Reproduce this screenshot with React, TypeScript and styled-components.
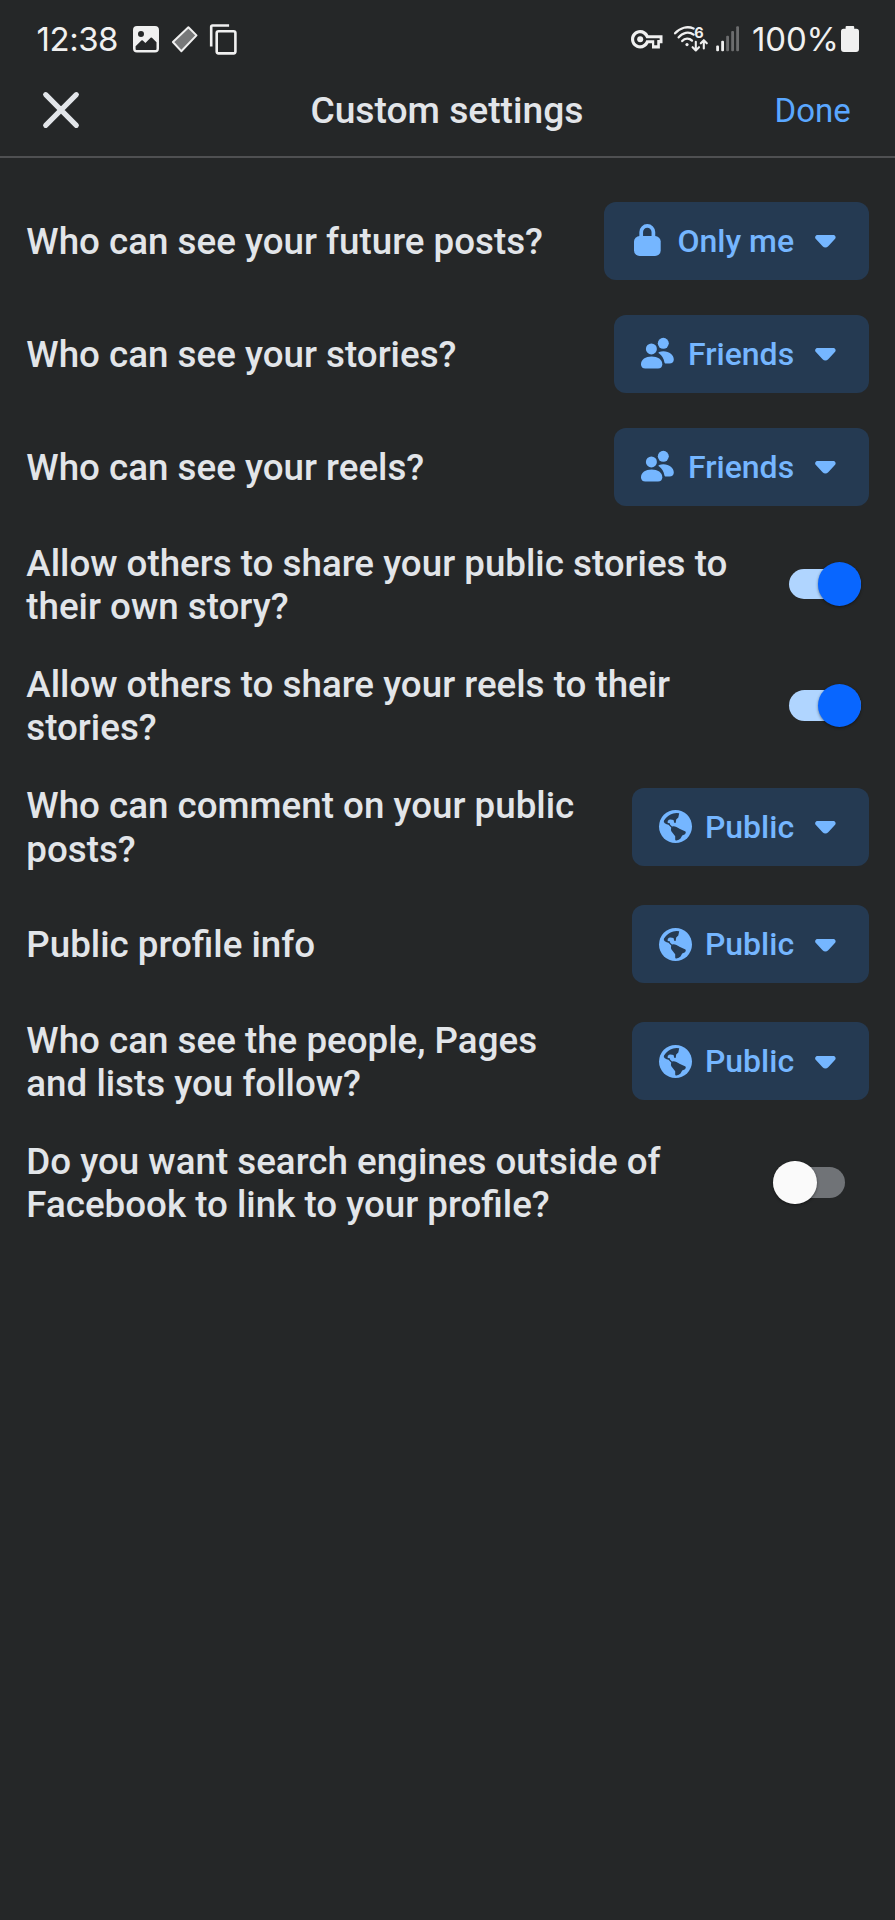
import React from 'react';
import styled, { createGlobalStyle } from 'styled-components';

const colors = {
  page: '#252728',
  text: '#e2e5e9',
  status: '#f0f0f0',
  statusDim: '#6c6d6e',
  link: '#5aa7ff',
  divider: '#4f5052',
  button: '#253a52',
  accent: '#75b6ff',
};

const GlobalStyle = createGlobalStyle`
  * { box-sizing: border-box; }
  body {
    margin: 0;
    background: ${colors.page};
    color: ${colors.text};
    font-family: Roboto, sans-serif;
  }
  svg { display: block; flex: none; overflow: visible; }
  button { font: inherit; color: inherit; border: 0; padding: 0; background: none; }
`;

const Screen = styled.div`
  display: flex;
  flex-direction: column;
  min-height: 1920px;
  background: ${colors.page};
`;

const StatusBar = styled.div`
  display: flex;
  align-items: center;
  justify-content: space-between;
  height: 64px;
  padding: 14px 35.7px 0 36.6px;
  color: ${colors.status};
  font: 400 33px/50px Inter, sans-serif;
`;

const StatusGroup = styled.div<{ $gap: number }>`
  display: flex;
  align-items: center;
  gap: ${(p) => p.$gap}px;
`;

const Clock = styled.span`
  margin-right: 2.3px;
  letter-spacing: -0.5px;
`;

const Battery = styled.span`
  display: flex;
  align-items: center;
  gap: 2.6px;
  margin-left: 5.2px;
`;

const Percent = styled.span`
  letter-spacing: -0.2px;
`;

const Header = styled.header`
  display: grid;
  grid-template-columns: 1fr auto 1fr;
  align-items: center;
  height: 94px;
  padding: 0 44.2px 0 43px;
  border-bottom: 2px solid ${colors.divider};
`;

const Title = styled.h1`
  margin: 0;
  padding-top: 1px;
  font-size: 37.2px;
  line-height: 43px;
  font-weight: 500;
`;

const DoneButton = styled.button`
  justify-self: end;
  padding-top: 1px;
  color: ${colors.link};
  font-size: 33px;
  line-height: 40px;
`;

const CloseButton = styled.button`
  justify-self: start;
`;

const List = styled.main`
  display: flex;
  flex-direction: column;
  padding: 26.3px 26px 0 26.3px;
`;

const Row = styled.div`
  display: flex;
  align-items: center;
  justify-content: space-between;
  gap: 32px;
  padding: 17.5px 0;
`;

const Label = styled.span`
  padding-top: 0.8px;
  margin-bottom: -0.8px;
  font-size: 36.74px;
  line-height: 43.2px;
  font-weight: 500;
`;

const PrivacyButton = styled.button`
  display: flex;
  align-items: center;
  flex: none;
  height: 78px;
  padding: 0 33px 0 27px;
  border-radius: 12px;
  background: ${colors.button};
  color: ${colors.accent};
`;

const PrivacyText = styled.span`
  margin: 0 20.9px 0 13.2px;
  font-size: 32px;
  line-height: 40px;
  font-weight: 500;
`;

const Track = styled.button<{ $on: boolean }>`
  display: flex;
  align-items: center;
  justify-content: ${(p) => (p.$on ? 'flex-end' : 'flex-start')};
  flex: none;
  width: 72px;
  height: 30.6px;
  margin-right: ${(p) => (p.$on ? 7.9 : 23.8)}px;
  border-radius: 16px;
  background: ${(p) => (p.$on ? '#b0d5ff' : '#707377')};
`;

const Thumb = styled.span<{ $on: boolean }>`
  width: 43.6px;
  height: 43.6px;
  border-radius: 50%;
  background: ${(p) => (p.$on ? '#0866ff' : '#fafafa')};
  box-shadow: 0 1px 3px rgba(0, 0, 0, 0.45);
`;

const ImageIcon = () => (
  <svg width="26" height="26.4" viewBox="0 0 26 26.4" fill="currentColor">
    <path
      fillRule="evenodd"
      d="M4 0H22a4 4 0 0 1 4 4V22.4a4 4 0 0 1-4 4H4a4 4 0 0 1-4-4V4a4 4 0 0 1 4-4zM8 5.1a3 3 0 1 0 0 6a3 3 0 1 0 0-6zM2.6 20.2V23q0 .9.9.9H22.6q.9 0 .9-.9V16.2L19 11.8q-.7-.6-1.4 0L12.4 17L9.8 14.6q-.7-.6-1.4 0z"
    />
  </svg>
);

const EraserIcon = () => (
  <svg width="26" height="27" viewBox="0.5 0 26 27">
    <path d="M16.9 1.3L25 9.4L9.8 25.2L1.4 16z" fill="#777879" stroke="currentColor" strokeWidth="2" strokeLinejoin="round" />
  </svg>
);

const CopyIcon = () => (
  <svg width="27" height="31" viewBox="0.3 0 27 31" fill="none" stroke="currentColor" strokeWidth="2.6">
    <path d="M1.5 22.5V2.8Q1.5 1.5 2.8 1.5H19.4" />
    <rect x="7" y="7.2" width="18.7" height="22.2" rx="1.8" />
  </svg>
);

const KeyIcon = () => (
  <svg width="31.5" height="18.4" viewBox="0 5 24 14" fill="currentColor">
    <path
      fillRule="evenodd"
      d="M22 19h-6v-4h-2.68c-1.14 2.42-3.6 4-6.32 4-3.86 0-7-3.14-7-7s3.14-7 7-7c2.72 0 5.17 1.58 6.32 4H24v6h-2v4zm-4.3-2.3h2.3v-4h1.8v-1.4H11.6l-.4-.9C10.5 8.7 8.9 7.4 7 7.4c-2.5 0-4.6 2-4.6 4.6s2.1 4.6 4.6 4.6c1.9 0 3.6-1.2 4.3-3l.3-.8H17.7v3.9z"
    />
    <circle cx="7" cy="12" r="2.3" />
  </svg>
);

const WifiIcon = () => (
  <svg width="34" height="26" viewBox="0 0 34 26" fill="none" stroke="currentColor" strokeLinecap="round">
    <g strokeWidth="2.3">
      <path d="M1.1 7.3C6 1.6 13.5 -.2 19.6 2.5" />
      <path d="M4.6 11.4C8.4 6.4 15 5.2 19.6 8.6" />
      <path d="M8.2 15C10.8 11.9 15.2 11.7 18 14.6" />
    </g>
    <circle cx="13" cy="18.6" r="1.6" fill="currentColor" stroke="none" />
    <g strokeWidth="2.1" strokeLinejoin="round">
      <path d="M21.8 15.8V24.2M18.6 21.2L21.8 24.4L25 21.2" />
      <path d="M29.8 22.4V14.4M26.8 17.3L29.8 14.2L32.8 17.3" />
    </g>
    <text x="20.2" y="11.5" fontFamily="Inter, sans-serif" fontSize="14.5" fontWeight="700" fill="currentColor" stroke="none">6</text>
  </svg>
);

const SignalIcon = () => (
  <svg width="23" height="26" viewBox="0 0 23 26" fill="currentColor">
    {[19.4, 14.8, 9.8, 5, 0.2].map((top, i) => (
      <rect key={top} x={0.2 + i * 5} y={top} width="2.8" height={25.3 - top} rx="1" fill={i < 2 ? colors.status : colors.statusDim} />
    ))}
  </svg>
);

const BatteryIcon = () => (
  <svg width="18" height="26" viewBox="0 0 18 26" fill="currentColor">
    <path d="M5.6 0H12.2Q13.2 0 13.2 1V2.8H15.4Q18 2.8 18 5.4V23Q18 26 15 26H3Q0 26 0 23V5.4Q0 2.8 2.6 2.8H4.6V1Q4.6 0 5.6 0z" />
  </svg>
);

const CloseIcon = () => (
  <svg width="36" height="36" viewBox="0 0 36 36" stroke={colors.text} strokeWidth="5.2" strokeLinecap="round">
    <path d="M2.7 2.7L33.3 33.3M33.3 2.7L2.7 33.3" />
  </svg>
);

const LockIcon = () => (
  <svg width="33" height="33" viewBox="0 0 33 33" fill="currentColor">
    <path d="M10.2 14V8a6.1 6.1 0 0 1 12.2 0v6" fill="none" stroke="currentColor" strokeWidth="3.7" />
    <rect x="3" y="12" width="26.7" height="20" rx="5.6" />
  </svg>
);

const FriendsIcon = () => (
  <svg width="33.8" height="33" viewBox="0 0 33.8 33" fill="currentColor">
    <circle cx="10.4" cy="11.9" r="5.5" />
    <circle cx="22.3" cy="6.3" r="5.5" />
    <path d="M0 27.3C0 22.5 4.5 19.5 10.6 19.5S21.3 22.5 21.3 27.3C21.3 30 19.7 31.6 17 31.6H4.3C1.6 31.6 0 30 0 27.3z" />
    <path d="M18.2 14.9C19.4 14.4 20.8 14.2 22.3 14.2C28.5 14.2 32.8 18 32.8 22.4C32.8 25 31.1 26.5 28.5 26.5H24.8C24 26.5 23.6 26.1 23.4 25.2C22.7 21.4 21 18.6 18.2 16.6C17.3 16 17.3 15.3 18.2 14.9z" />
  </svg>
);

const GlobeIcon = () => (
  <svg width="33" height="33" viewBox="0 0 33 33">
    <circle cx="16.5" cy="16.5" r="16.5" fill="currentColor" />
    <path
      fill={colors.button}
      d="M20.2 3.3Q17 2.8 14.2 3.5Q8.6 5.2 5 10.5Q4.2 12.2 5.8 13.2Q7.6 14.6 9.5 14.8L12.2 17.4Q11.6 19.6 12.5 21.5L16.2 26.2V29.5Q16.2 30.8 17.5 30.5Q20 30 21.5 28.5L23.2 25.6L26 24.2Q27.4 22.6 26.5 21.5L21 18.9L17.4 17.1Q15 15.8 13 16.6L11 14.5L10.8 13.3L8.7 12.9V10.9Q10 9.4 11.5 9.5L14.5 9.9L15.2 12.6Q16.4 13.8 16.8 12.2L17.2 9.6L19.3 7.5z"
    />
  </svg>
);

const CaretIcon = () => (
  <svg width="21" height="13" viewBox="0 -0.9 21 13" fill="currentColor">
    <path d="M2.5 0H18.3C20.5 0 21.4 2.6 19.9 4.1L13.2 11.3C11.6 13.1 9.2 13.1 7.6 11.3L.9 4.1C-.6 2.6 .3 0 2.5 0z" />
  </svg>
);

const audiences = {
  onlyMe: { text: 'Only me', Icon: LockIcon },
  friends: { text: 'Friends', Icon: FriendsIcon },
  public: { text: 'Public', Icon: GlobeIcon },
};

type Setting = { label: string } & ({ audience: keyof typeof audiences } | { on: boolean });

const settings: Setting[] = [
  { label: 'Who can see your future posts?', audience: 'onlyMe' },
  { label: 'Who can see your stories?', audience: 'friends' },
  { label: 'Who can see your reels?', audience: 'friends' },
  { label: 'Allow others to share your public stories to their own story?', on: true },
  { label: 'Allow others to share your reels to their stories?', on: true },
  { label: 'Who can comment on your public posts?', audience: 'public' },
  { label: 'Public profile info', audience: 'public' },
  { label: 'Who can see the people, Pages and lists you follow?', audience: 'public' },
  { label: 'Do you want search engines outside of Facebook to link to your profile?', on: false },
];

const AudiencePicker = ({ audience }: { audience: keyof typeof audiences }) => {
  const { text, Icon } = audiences[audience];
  return (
    <PrivacyButton>
      <Icon />
      <PrivacyText>{text}</PrivacyText>
      <CaretIcon />
    </PrivacyButton>
  );
};

const Switch = ({ on }: { on: boolean }) => (
  <Track $on={on} role="switch" aria-checked={on}>
    <Thumb $on={on} />
  </Track>
);

export default function App() {
  return (
    <Screen>
      <GlobalStyle />
      <StatusBar>
        <StatusGroup $gap={12.7}>
          <Clock>12:38</Clock>
          <ImageIcon />
          <EraserIcon />
          <CopyIcon />
        </StatusGroup>
        <StatusGroup $gap={7.8}>
          <StatusGroup $gap={11.5}>
            <KeyIcon />
            <WifiIcon />
          </StatusGroup>
          <SignalIcon />
          <Battery>
            <Percent>100%</Percent>
            <BatteryIcon />
          </Battery>
        </StatusGroup>
      </StatusBar>
      <Header>
        <CloseButton aria-label="Close">
          <CloseIcon />
        </CloseButton>
        <Title>Custom settings</Title>
        <DoneButton>Done</DoneButton>
      </Header>
      <List>
        {settings.map((s) => (
          <Row key={s.label}>
            <Label>{s.label}</Label>
            {'audience' in s ? <AudiencePicker audience={s.audience} /> : <Switch on={s.on} />}
          </Row>
        ))}
      </List>
    </Screen>
  );
}
